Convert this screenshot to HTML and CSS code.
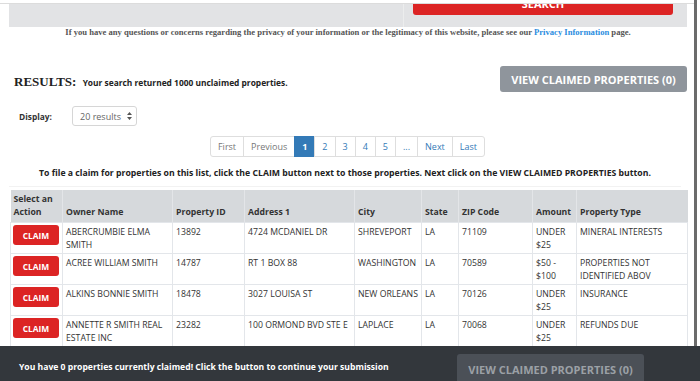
FILE: index.html
```html
<!DOCTYPE html>
<html lang="en">
<head>
  <meta charset="UTF-8">
  <title>Unclaimed Property Search Results</title>
  <link rel="stylesheet" href="styles.css">
</head>
<body>
  <div class="page">
    <div class="topline"></div>

    <!-- Search panel (scrolled past) -->
    <section class="search-panel">
      <div class="search-left"></div>
      <div class="search-right">
        <button class="btn-search"><span>SEARCH</span></button>
      </div>
    </section>

    <p class="privacy">If you have any questions or concerns regarding the privacy of your information or the legitimacy of this website, please see our <a href="#">Privacy Information</a> page.</p>

    <!-- Results header -->
    <section class="results-head">
      <h2><span class="results-label">RESULTS:</span> <span class="results-count">Your search returned 1000 unclaimed properties.</span></h2>
      <button class="btn-view">VIEW CLAIMED PROPERTIES (0)</button>
    </section>

    <div class="display-row">
      <label>Display:</label>
      <div class="select">
        20 results
        <svg width="5" height="8" viewBox="0 0 5 8"><path d="M2.5 0 L5 3 L0 3 Z M2.5 8 L5 5 L0 5 Z" fill="#555"/></svg>
      </div>
    </div>

    <nav class="pager">
      <a class="disabled">First</a>
      <a class="disabled">Previous</a>
      <a class="active">1</a>
      <a>2</a>
      <a>3</a>
      <a>4</a>
      <a>5</a>
      <a>...</a>
      <a>Next</a>
      <a>Last</a>
    </nav>

    <p class="instructions">To file a claim for properties on this list, click the CLAIM button next to those properties. Next click on the VIEW CLAIMED PROPERTIES button.</p>

    <table class="results">
      <colgroup>
        <col style="width:52px">
        <col style="width:110px">
        <col style="width:72px">
        <col style="width:110px">
        <col style="width:67px">
        <col style="width:37px">
        <col style="width:74px">
        <col style="width:44px">
        <col style="width:111px">
      </colgroup>
      <thead>
        <tr>
          <th>Select an Action</th>
          <th>Owner Name</th>
          <th>Property ID</th>
          <th>Address 1</th>
          <th>City</th>
          <th>State</th>
          <th>ZIP Code</th>
          <th>Amount</th>
          <th>Property Type</th>
        </tr>
      </thead>
      <tbody>
        <tr>
          <td class="action"><button class="btn-claim">CLAIM</button></td>
          <td>ABERCRUMBIE ELMA SMITH</td>
          <td>13892</td>
          <td>4724 MCDANIEL DR</td>
          <td>SHREVEPORT</td>
          <td>LA</td>
          <td>71109</td>
          <td>UNDER $25</td>
          <td>MINERAL INTERESTS</td>
        </tr>
        <tr>
          <td class="action"><button class="btn-claim">CLAIM</button></td>
          <td>ACREE WILLIAM SMITH</td>
          <td>14787</td>
          <td>RT 1 BOX 88</td>
          <td>WASHINGTON</td>
          <td>LA</td>
          <td>70589</td>
          <td>$50 - $100</td>
          <td>PROPERTIES NOT IDENTIFIED ABOV</td>
        </tr>
        <tr>
          <td class="action"><button class="btn-claim">CLAIM</button></td>
          <td>ALKINS BONNIE SMITH</td>
          <td>18478</td>
          <td>3027 LOUISA ST</td>
          <td>NEW ORLEANS</td>
          <td>LA</td>
          <td>70126</td>
          <td>UNDER $25</td>
          <td>INSURANCE</td>
        </tr>
        <tr>
          <td class="action"><button class="btn-claim">CLAIM</button></td>
          <td>ANNETTE R SMITH REAL ESTATE INC</td>
          <td>23282</td>
          <td>100 ORMOND BVD STE E</td>
          <td>LAPLACE</td>
          <td>LA</td>
          <td>70068</td>
          <td>UNDER $25</td>
          <td>REFUNDS DUE</td>
        </tr>
      </tbody>
    </table>
  </div>

  <!-- Claim bar -->
  <footer class="claim-bar">
    <span>You have 0 properties currently claimed! Click the button to continue your submission</span>
    <button class="btn-bar" disabled>VIEW CLAIMED PROPERTIES (0)</button>
  </footer>
</body>
</html>
```

FILE: styles.css
```css
/* Reset */
* {
  margin: 0;
  padding: 0;
  box-sizing: border-box;
}

body {
  font-family: 'Open Sans', 'Liberation Sans', sans-serif;
  color: #333;
  background: #fff;
  width: 700px;
  height: 381px;
  overflow: hidden;
}

button {
  font-family: inherit;
  border: none;
  cursor: pointer;
}

/* Page wrapper (scroll frame) */
.page {
  width: 697px;
  height: 346px;
  overflow: hidden;
  border-right: 3px solid #6b6b6b;
  padding: 0 7px 0 9px;
}

.topline {
  height: 4px;
  border-bottom: 1px solid #dcdcdc;
  margin: 0 -7px 0 -9px;
}

/* Search panel */
.search-panel {
  display: flex;
  height: 23px;
  background: #e2e3e5;
}

.search-left {
  width: 395px;
  border-right: 1px solid #eceded;
}

.search-right {
  flex: 1;
  padding-left: 9px;
}

.btn-search {
  display: block;
  width: 260px;
  height: 11px;
  background: #dc2424;
  color: #fff;
  font-weight: bold;
  font-size: 11px;
  line-height: 12px;
  border-radius: 0 0 3px 3px;
  overflow: hidden;
}

.btn-search span {
  display: block;
  margin-top: -12px;
}

/* Privacy note */
.privacy {
  font-family: 'Liberation Serif', 'Times New Roman', serif;
  font-weight: bold;
  font-size: 8.6px;
  color: #555;
  text-align: center;
  line-height: 11px;
}

.privacy a {
  color: #2b8de0;
  text-decoration: none;
}

/* Results header */
.results-head {
  display: flex;
  justify-content: space-between;
  align-items: flex-start;
  margin-top: 28px;
  padding-left: 5px;
}

.results-head h2 {
  font-weight: normal;
  color: #222;
  margin-top: 3px;
  line-height: 16px;
}

.results-label {
  font-family: 'Liberation Serif', 'Times New Roman', serif;
  font-size: 13px;
  font-weight: bold;
}

.results-count {
  font-size: 8.4px;
  font-weight: bold;
}

.btn-view {
  width: 187px;
  height: 26px;
  background: #8f959c;
  color: #fff;
  font-weight: bold;
  font-size: 11px;
  border-radius: 3px;
}

/* Display select */
.display-row {
  display: flex;
  align-items: center;
  margin-top: 14px;
  padding-left: 10px;
}

.display-row label {
  font-size: 8.4px;
  font-weight: bold;
  width: 53px;
}

.select {
  display: flex;
  align-items: center;
  gap: 6px;
  width: 65px;
  height: 20px;
  border: 1px solid #d6d6d6;
  border-radius: 3px;
  padding-left: 7px;
  font-size: 9px;
  color: #666;
}

/* Pagination */
.pager {
  display: flex;
  justify-content: center;
  margin-top: 10px;
}

.pager a {
  display: block;
  height: 21px;
  line-height: 19px;
  padding: 0 7px;
  font-size: 9px;
  color: #337ab7;
  border: 1px solid #dedede;
  margin-left: -1px;
}

.pager a:first-child {
  border-radius: 3px 0 0 3px;
}

.pager a:last-child {
  border-radius: 0 3px 3px 0;
}

.pager a.disabled {
  color: #777;
}

.pager a.active {
  background: #337ab7;
  border-color: #337ab7;
  color: #fff;
  font-weight: bold;
}

/* Instructions */
.instructions {
  font-size: 8.7px;
  font-weight: bold;
  text-align: center;
  color: #222;
  line-height: 12px;
  margin-top: 10px;
  padding-bottom: 7px;
  border-bottom: 1px solid #f2f2f2;
  margin-right: 6px;
}

/* Results table */
.results {
  table-layout: fixed;
  width: 677px;
  margin: 3px 0 0 1px;
  border-collapse: collapse;
  font-size: 8.7px;
  line-height: 13px;
}

.results th {
  background: #d6d9dc;
  font-weight: bold;
  text-align: left;
  vertical-align: bottom;
  height: 31px;
  padding: 3px;
  border-left: 1px solid #e3e5e8;
  color: #333;
}

.results th:first-child {
  border-left: none;
}

.results td {
  vertical-align: top;
  padding: 3px 3px 1px 3px;
  height: 30px;
  border: 1px solid #e3e6ea;
  color: #333;
}

.results td.action {
  padding: 2px 2px;
}

.btn-claim {
  display: block;
  width: 46px;
  height: 20px;
  background: #dc2424;
  color: #fff;
  font-weight: bold;
  font-size: 8.4px;
  border-radius: 3px;
}

/* Bottom claim bar */
.claim-bar {
  height: 35px;
  background: #33373c;
  display: flex;
  align-items: flex-start;
  padding-left: 19px;
  overflow: hidden;
}

.claim-bar span {
  font-size: 8.6px;
  font-weight: bold;
  color: #fff;
  margin-top: 15px;
  width: 438px;
}

.btn-bar {
  width: 187px;
  height: 30px;
  margin-top: 8px;
  background: #4b5057;
  color: #9ba0a6;
  font-weight: bold;
  font-size: 11px;
  border-radius: 3px;
  cursor: default;
}
```
